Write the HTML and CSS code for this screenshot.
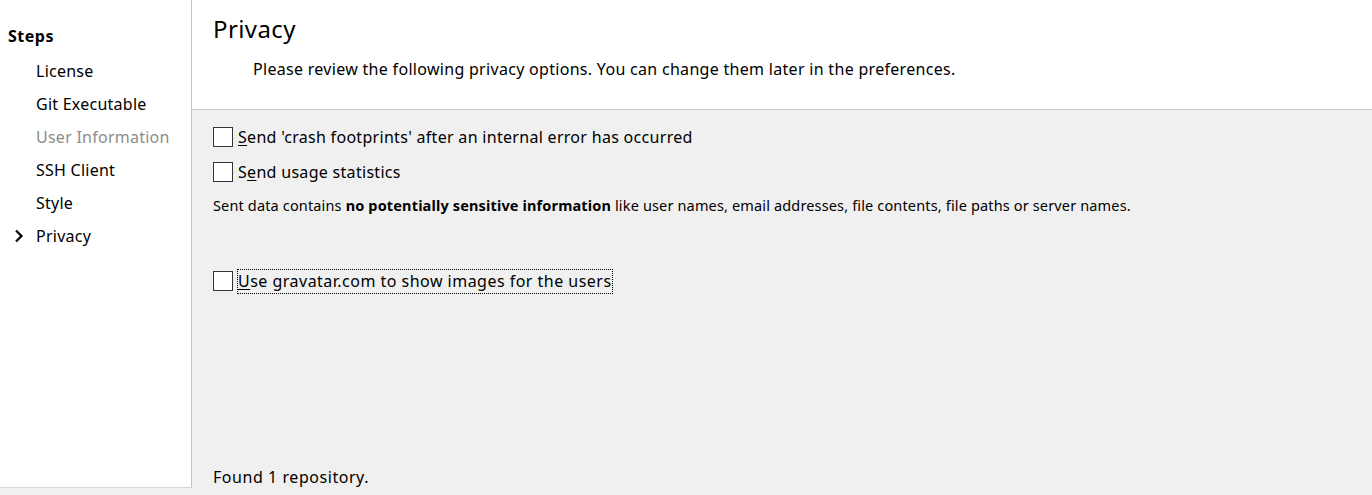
FILE: index.html
```html
<!DOCTYPE html>
<html>
<head>
<meta charset="utf-8">
<link rel="stylesheet" href="styles.css">
</head>
<body>
<div class="window">
  <aside class="sidebar">
    <div class="steps-title">Steps</div>
    <ul class="steps">
      <li class="step">License</li>
      <li class="step">Git Executable</li>
      <li class="step disabled">User Information</li>
      <li class="step">SSH Client</li>
      <li class="step">Style</li>
      <li class="step current"><svg class="chev" width="10" height="14" viewBox="0 0 10 14"><path d="M2 1.5 L7.5 7 L2 12.5" fill="none" stroke="#000" stroke-width="2.2"/></svg>Privacy</li>
    </ul>
  </aside>
  <main class="main">
    <header class="header">
      <h1 class="title">Privacy</h1>
      <p class="subtitle">Please review the following privacy options. You can change them later in the preferences.</p>
    </header>
    <section class="content">
      <label class="check first"><span class="box"></span><span class="lbl"><u>S</u>end 'crash footprints' after an internal error has occurred</span></label>
      <label class="check second"><span class="box"></span><span class="lbl">S<u>e</u>nd usage statistics</span></label>
      <p class="note">Sent data contains <b>no potentially sensitive information</b> like user names, email addresses, file contents, file paths or server names.</p>
      <label class="check third"><span class="box"></span><span class="lbl focus"><u>U</u>se gravatar.com to show images for the users</span></label>
      <div class="spacer"></div>
      <div class="status">Found 1 repository.</div>
    </section>
  </main>
</div>
</body>
</html>
```

FILE: styles.css
```css
html, body {
  margin: 0;
  padding: 0;
}
body {
  width: 1372px;
  height: 495px;
  background: #f0f0f0;
  font-family: "Noto Sans", "Open Sans", sans-serif;
  color: #000;
  overflow: hidden;
}
.window {
  display: flex;
  height: 488px;
}
.sidebar {
  width: 192px;
  background: #fff;
  border-right: 1px solid #c4c4c4;
  border-bottom: 1px solid #d8d8d8;
  box-sizing: border-box;
  padding-top: 24px;
  flex: none;
}
.steps-title {
  font-weight: bold;
  font-size: 16px;
  line-height: 24px;
  padding-left: 8px;
  letter-spacing: 0.5px;
}
.steps {
  list-style: none;
  margin: 10px 0 0 0;
  padding: 0;
}
.step {
  height: 33px;
  line-height: 26px;
  font-size: 16px;
  padding-left: 36px;
  position: relative;
  letter-spacing: 0.25px;
}
.step.disabled {
  color: #8d8d8d;
}
.chev {
  position: absolute;
  left: 14px;
  top: 6px;
}
.main {
  flex: 1;
  display: flex;
  flex-direction: column;
}
.header {
  background: #fff;
  height: 109px;
  border-bottom: 1px solid #cfcfcf;
  padding-left: 21px;
  flex: none;
}
.title {
  margin: 0;
  font-weight: normal;
  font-size: 24px;
  line-height: 30px;
  padding-top: 14px;
  letter-spacing: 0.4px;
}
.subtitle {
  margin: 14px 0 0 40px;
  font-size: 16px;
  line-height: 22px;
  letter-spacing: 0.3px;
}
.content {
  flex: 1;
  display: flex;
  flex-direction: column;
  padding-left: 21px;
}
.check {
  display: flex;
  align-items: center;
  font-size: 16px;
  letter-spacing: 0.3px;
  height: 24px;
}
.check.first { margin-top: 15px; }
.check.second { margin-top: 11px; }
.check.third { margin-top: 54px; letter-spacing: 0.48px; }
.box {
  width: 18px;
  height: 18px;
  border: 1px solid #333;
  background: #fff;
  margin-right: 5px;
  flex: none;
}
.lbl u {
  text-decoration-thickness: 1px;
  text-underline-offset: 2px;
}
.focus {
  outline: 1px dotted #000;
  outline-offset: 0;
  padding: 0 0 1px 0;
}
.note {
  margin: 11px 0 0 0;
  font-size: 14.5px;
  line-height: 20px;
  letter-spacing: 0.15px;
}
.spacer { flex: 1; }
.status {
  font-size: 16px;
  line-height: 22px;
  margin-bottom: 0px;
  letter-spacing: 0.55px;
}
```
